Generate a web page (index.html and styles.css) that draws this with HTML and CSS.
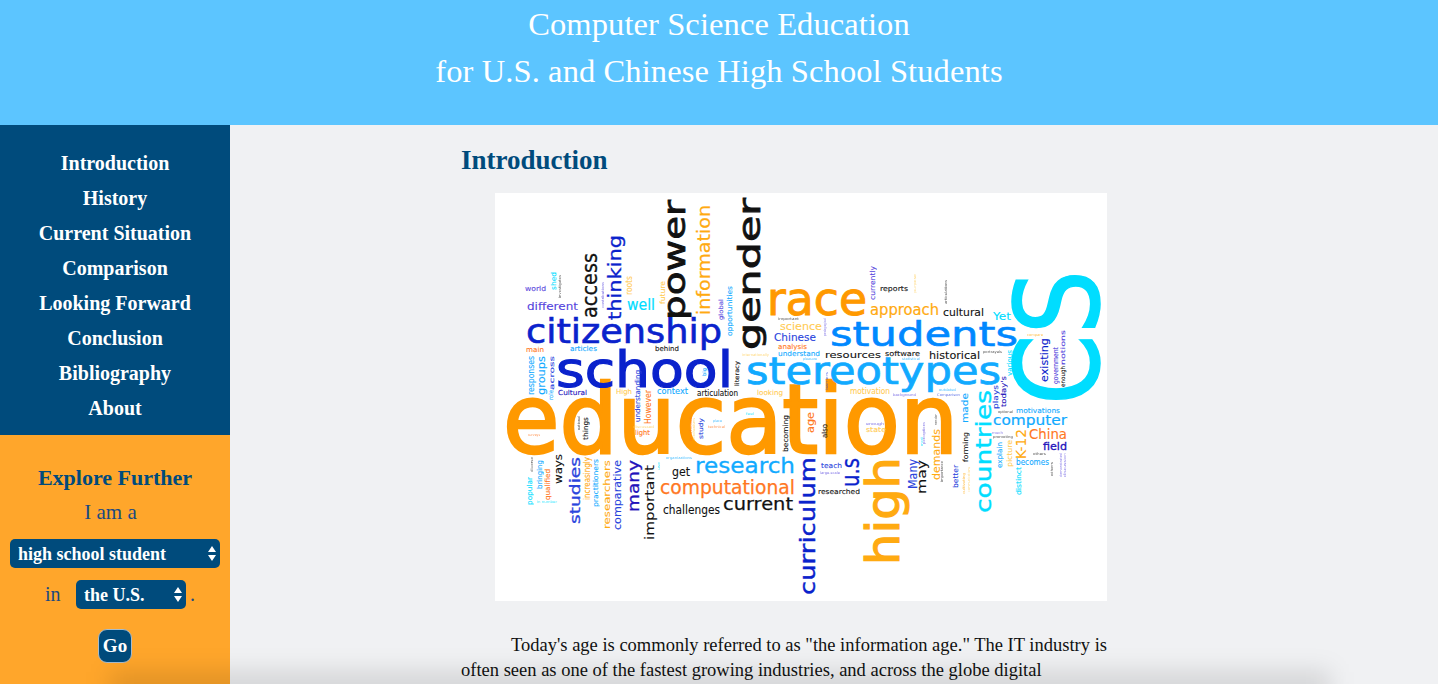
FILE: index.html
```html
<!DOCTYPE html>
<html lang="en">
<head>
  <meta charset="UTF-8">
  <meta name="viewport" content="width=device-width, initial-scale=1">
  <title>Computer Science Education</title>
  <link rel="stylesheet" href="styles.css">
</head>
<body>

  <header class="site-header">
    <h1>Computer Science Education<br>for U.S. and Chinese High School Students</h1>
  </header>

  <div class="page">
    <aside class="sidebar">
      <nav class="side-nav">
        <a href="#">Introduction</a>
        <a href="#">History</a>
        <a href="#">Current Situation</a>
        <a href="#">Comparison</a>
        <a href="#">Looking Forward</a>
        <a href="#">Conclusion</a>
        <a href="#">Bibliography</a>
        <a href="#">About</a>
      </nav>

      <form class="explore">
        <h3>Explore Further</h3>
        <p class="explore-line">I am a</p>
        <div class="select-wrap select-wide">
          <select>
            <option>high school student</option>
            <option>teacher</option>
          </select>
          <svg class="select-arrows" viewBox="0 0 8 15"><path d="M4 0l4 6H0zM4 15l4-6H0z"/></svg>
        </div>
        <div class="explore-row">
          <span class="explore-in">in</span>
          <div class="select-wrap select-short">
            <select>
              <option>the U.S.</option>
              <option>China</option>
            </select>
            <svg class="select-arrows" viewBox="0 0 8 15"><path d="M4 0l4 6H0zM4 15l4-6H0z"/></svg>
          </div>
          <span class="explore-dot">.</span>
        </div>
        <button type="button" class="go-btn">Go</button>
      </form>
    </aside>

    <main class="content">
      <h2>Introduction</h2>

      <!-- word cloud, coordinates are page pixels so viewBox starts at the image corner -->
      <svg class="cloud" viewBox="495 193 612 408" width="612" height="408">
        <!-- big horizontal words -->
        <text class="orange" x="503" y="453" font-size="97" stroke-width="2.5" textLength="455" lengthAdjust="spacingAndGlyphs">education</text>
        <text class="blue" x="556" y="387" font-size="49" stroke-width="1.2" textLength="177" lengthAdjust="spacingAndGlyphs">school</text>
        <text class="blue" x="526" y="343" font-size="33" stroke-width=".6" textLength="196" lengthAdjust="spacingAndGlyphs">citizenship</text>
        <text class="sky" x="830" y="346" font-size="34" stroke-width=".6" textLength="188" lengthAdjust="spacingAndGlyphs">students</text>
        <text class="aqua" x="746" y="384" font-size="38" stroke-width=".7" textLength="255" lengthAdjust="spacingAndGlyphs">stereotypes</text>
        <text class="orange" x="767" y="315" font-size="46" stroke-width="1" textLength="100" lengthAdjust="spacingAndGlyphs">race</text>
        <text class="aqua" x="695" y="473" font-size="21" stroke-width=".3" textLength="100" lengthAdjust="spacingAndGlyphs">research</text>
        <text class="tangerine" x="660" y="494" font-size="19" stroke-width=".25" textLength="135" lengthAdjust="spacingAndGlyphs">computational</text>
        <text class="dark" x="723" y="510" font-size="18" stroke-width=".25" textLength="70" lengthAdjust="spacingAndGlyphs">current</text>
        <text class="dark" x="663" y="514" font-size="12" textLength="57" lengthAdjust="spacingAndGlyphs">challenges</text>
        <text class="dark" x="672" y="476" font-size="12" textLength="18" lengthAdjust="spacingAndGlyphs">get</text>

        <!-- big vertical words -->
        <text class="cyan" transform="translate(1098 405) rotate(-90)" font-size="116" stroke-width="1.5" textLength="135" lengthAdjust="spacingAndGlyphs">CS</text>
        <text class="dark" transform="translate(760 350) rotate(-90)" font-size="31" stroke-width=".8" textLength="152" lengthAdjust="spacingAndGlyphs">gender</text>
        <text class="dark" transform="translate(685 320) rotate(-90)" font-size="30" stroke-width=".8" textLength="120" lengthAdjust="spacingAndGlyphs">power</text>
        <text class="amber" transform="translate(710 315) rotate(-90)" font-size="17" stroke-width=".2" textLength="110" lengthAdjust="spacingAndGlyphs">information</text>
        <text class="blue" transform="translate(621 320) rotate(-90)" font-size="17" stroke-width=".3" textLength="85" lengthAdjust="spacingAndGlyphs">thinking</text>
        <text class="dark" transform="translate(597 318) rotate(-90)" font-size="22" stroke-width=".3" textLength="65" lengthAdjust="spacingAndGlyphs">access</text>
        <text class="blue" transform="translate(815 595) rotate(-90)" font-size="22" stroke-width=".4" textLength="138" lengthAdjust="spacingAndGlyphs">curriculum</text>
        <text class="amber" transform="translate(899 565) rotate(-90)" font-size="46" stroke-width="1.2" textLength="108" lengthAdjust="spacingAndGlyphs">high</text>
        <text class="blue" transform="translate(859 487) rotate(-90)" font-size="25" stroke-width=".3" textLength="29" lengthAdjust="spacingAndGlyphs">u.s</text>
        <text class="cyan" transform="translate(991 513) rotate(-90)" font-size="22" stroke-width=".4" textLength="123" lengthAdjust="spacingAndGlyphs">countries</text>
        <text class="royal" transform="translate(580 524) rotate(-90)" font-size="14" stroke-width=".3" textLength="67" lengthAdjust="spacingAndGlyphs">studies</text>
        <text class="indigo" transform="translate(639 512) rotate(-90)" font-size="16" stroke-width=".3" textLength="52" lengthAdjust="spacingAndGlyphs">many</text>
        <text class="dark" transform="translate(654 540) rotate(-90)" font-size="13" textLength="75" lengthAdjust="spacingAndGlyphs">important</text>
        <text class="royal" transform="translate(621 530) rotate(-90)" font-size="10" textLength="70" lengthAdjust="spacingAndGlyphs">comparative</text>
        <text class="amber" transform="translate(610 529) rotate(-90)" font-size="9" textLength="69" lengthAdjust="spacingAndGlyphs">researchers</text>
        <text class="dark" transform="translate(562 484) rotate(-90)" font-size="10" textLength="30" lengthAdjust="spacingAndGlyphs">ways</text>
        <text class="royal" transform="translate(917 489) rotate(-90)" font-size="12" textLength="30" lengthAdjust="spacingAndGlyphs">Many</text>
        <text class="dark" transform="translate(926 494) rotate(-90)" font-size="13" textLength="34" lengthAdjust="spacingAndGlyphs">may</text>
        <text class="amber" transform="translate(940 480) rotate(-90)" font-size="10" textLength="51" lengthAdjust="spacingAndGlyphs">demands</text>
        <text class="blue" transform="translate(1048 382) rotate(-90)" font-size="10" textLength="44" lengthAdjust="spacingAndGlyphs">existing</text>
        <text class="amber" transform="translate(1026 459) rotate(-90)" font-size="14" textLength="30" lengthAdjust="spacingAndGlyphs">K-12</text>

        <!-- middle sized horizontal -->
        <text class="aqua" x="993" y="425" font-size="14" stroke-width=".2" textLength="74" lengthAdjust="spacingAndGlyphs">computer</text>
        <text class="tangerine" x="1029" y="439" font-size="14" textLength="38" lengthAdjust="spacingAndGlyphs">China</text>
        <text class="indigo" x="1043" y="450" font-size="11" stroke-width=".3" textLength="24" lengthAdjust="spacingAndGlyphs">field</text>
        <text class="amber" x="870" y="315" font-size="15" stroke-width=".2" textLength="69" lengthAdjust="spacingAndGlyphs">approach</text>
        <text class="dark" x="943" y="316" font-size="10" textLength="41" lengthAdjust="spacingAndGlyphs">cultural</text>
        <text class="cyan" x="993" y="320" font-size="11" textLength="18" lengthAdjust="spacingAndGlyphs">Yet</text>
        <text class="dark" x="825" y="358" font-size="9" textLength="56" lengthAdjust="spacingAndGlyphs">resources</text>
        <text class="dark" x="885" y="356" font-size="7" textLength="35" lengthAdjust="spacingAndGlyphs">software</text>
        <text class="dark" x="929" y="359" font-size="10" textLength="51" lengthAdjust="spacingAndGlyphs">historical</text>
        <text class="cyan" x="627" y="310" font-size="15" stroke-width=".2" textLength="28" lengthAdjust="spacingAndGlyphs">well</text>
        <text class="violet" x="527" y="310" font-size="10" textLength="51" lengthAdjust="spacingAndGlyphs">different</text>
        <text class="violet" x="525" y="291" font-size="7" textLength="21" lengthAdjust="spacingAndGlyphs">world</text>
        <text class="dark" x="880" y="291" font-size="7" textLength="28" lengthAdjust="spacingAndGlyphs">reports</text>
        <text class="yellow" x="780" y="330" font-size="10" textLength="42" lengthAdjust="spacingAndGlyphs">science</text>
        <text class="royal" x="774" y="341" font-size="10" textLength="42" lengthAdjust="spacingAndGlyphs">Chinese</text>
        <text class="tangerine" x="778" y="349" font-size="7" textLength="29" lengthAdjust="spacingAndGlyphs">analysis</text>
        <text class="aqua" x="778" y="356" font-size="7" textLength="42" lengthAdjust="spacingAndGlyphs">understand</text>
        <text class="tangerine" x="526" y="352" font-size="7" textLength="18" lengthAdjust="spacingAndGlyphs">main</text>
        <text class="aqua" x="570" y="351" font-size="7" textLength="27" lengthAdjust="spacingAndGlyphs">articles</text>
        <text class="dark" x="655" y="351" font-size="7" textLength="24" lengthAdjust="spacingAndGlyphs">behind</text>
        <text class="indigo" x="558" y="395" font-size="7" textLength="29" lengthAdjust="spacingAndGlyphs">Cultural</text>
        <text class="yellow" x="616" y="394" font-size="7" textLength="16" lengthAdjust="spacingAndGlyphs">High</text>
        <text class="aqua" x="657" y="394" font-size="8" textLength="31" lengthAdjust="spacingAndGlyphs">context</text>
        <text class="dark" x="697" y="396" font-size="8" textLength="41" lengthAdjust="spacingAndGlyphs">articulation</text>
        <text class="yellow" x="757" y="395" font-size="7" textLength="26" lengthAdjust="spacingAndGlyphs">looking</text>
        <text class="yellow" x="850" y="394" font-size="8" textLength="40" lengthAdjust="spacingAndGlyphs">motivation</text>
        <text class="tangerine" x="635" y="435" font-size="7" textLength="15" lengthAdjust="spacingAndGlyphs">light</text>
        <text class="yellow" x="866" y="432" font-size="7" textLength="20" lengthAdjust="spacingAndGlyphs">state</text>
        <text class="royal" x="821" y="468" font-size="7" textLength="21" lengthAdjust="spacingAndGlyphs">teach</text>
        <text class="dark" x="818" y="494" font-size="7" textLength="42" lengthAdjust="spacingAndGlyphs">researched</text>
        <text class="aqua" x="1016" y="413" font-size="7" textLength="44" lengthAdjust="spacingAndGlyphs">motivations</text>
        <text class="aqua" x="1016" y="465" font-size="8" textLength="33" lengthAdjust="spacingAndGlyphs">becomes</text>

        <!-- small vertical -->
        <text class="yellow" transform="translate(632 295) rotate(-90)" font-size="8" textLength="19" lengthAdjust="spacingAndGlyphs">roots</text>
        <text class="yellow" transform="translate(665 304) rotate(-90)" font-size="7" textLength="23" lengthAdjust="spacingAndGlyphs">future</text>
        <text class="cyan" transform="translate(556 290) rotate(-90)" font-size="7" textLength="18" lengthAdjust="spacingAndGlyphs">shed</text>
        <text class="violet" transform="translate(723 320) rotate(-90)" font-size="6" textLength="21" lengthAdjust="spacingAndGlyphs">global</text>
        <text class="aqua" transform="translate(732 336) rotate(-90)" font-size="7" textLength="50" lengthAdjust="spacingAndGlyphs">opportunities</text>
        <text class="aqua" transform="translate(534 395) rotate(-90)" font-size="8" textLength="39" lengthAdjust="spacingAndGlyphs">responses</text>
        <text class="aqua" transform="translate(545 395) rotate(-90)" font-size="11" textLength="39" lengthAdjust="spacingAndGlyphs">groups</text>
        <text class="royal" transform="translate(554 390) rotate(-90)" font-size="6" textLength="34" lengthAdjust="spacingAndGlyphs">across</text>
        <text class="royal" transform="translate(640 422) rotate(-90)" font-size="7" textLength="52" lengthAdjust="spacingAndGlyphs">understanding</text>
        <text class="tangerine" transform="translate(651 424) rotate(-90)" font-size="8" textLength="34" lengthAdjust="spacingAndGlyphs">However</text>
        <text class="aqua" transform="translate(706 376) rotate(-90)" font-size="5" textLength="8" lengthAdjust="spacingAndGlyphs">big</text>
        <text class="dark" transform="translate(739 386) rotate(-90)" font-size="6" textLength="25" lengthAdjust="spacingAndGlyphs">literacy</text>
        <text class="royal" transform="translate(703 439) rotate(-90)" font-size="6" textLength="21" lengthAdjust="spacingAndGlyphs">study</text>
        <text class="dark" transform="translate(588 440) rotate(-90)" font-size="7" textLength="23" lengthAdjust="spacingAndGlyphs">things</text>
        <text class="dark" transform="translate(788 452) rotate(-90)" font-size="7" textLength="37" lengthAdjust="spacingAndGlyphs">becoming</text>
        <text class="amber" transform="translate(590 500) rotate(-90)" font-size="8" textLength="43" lengthAdjust="spacingAndGlyphs">increasingly</text>
        <text class="aqua" transform="translate(598 507) rotate(-90)" font-size="7" textLength="48" lengthAdjust="spacingAndGlyphs">practitioners</text>
        <text class="cyan" transform="translate(532 505) rotate(-90)" font-size="7" textLength="28" lengthAdjust="spacingAndGlyphs">popular</text>
        <text class="aqua" transform="translate(542 489) rotate(-90)" font-size="7" textLength="29" lengthAdjust="spacingAndGlyphs">bringing</text>
        <text class="tangerine" transform="translate(550 500) rotate(-90)" font-size="7" textLength="31" lengthAdjust="spacingAndGlyphs">qualified</text>
        <text class="royal" transform="translate(958 488) rotate(-90)" font-size="7" textLength="23" lengthAdjust="spacingAndGlyphs">better</text>
        <text class="dark" transform="translate(968 462) rotate(-90)" font-size="7" textLength="30" lengthAdjust="spacingAndGlyphs">forming</text>
        <text class="aqua" transform="translate(968 423) rotate(-90)" font-size="9" textLength="30" lengthAdjust="spacingAndGlyphs">made</text>
        <text class="aqua" transform="translate(1002 468) rotate(-90)" font-size="7" textLength="26" lengthAdjust="spacingAndGlyphs">explain</text>
        <text class="yellow" transform="translate(1012 467) rotate(-90)" font-size="7" textLength="27" lengthAdjust="spacingAndGlyphs">picture</text>
        <text class="cyan" transform="translate(1021 495) rotate(-90)" font-size="7" textLength="28" lengthAdjust="spacingAndGlyphs">distinct</text>
        <text class="tangerine" transform="translate(814 433) rotate(-90)" font-size="10" textLength="21" lengthAdjust="spacingAndGlyphs">age</text>
        <text class="dark" transform="translate(827 438) rotate(-90)" font-size="7" textLength="14" lengthAdjust="spacingAndGlyphs">also</text>
        <text class="violet" transform="translate(875 300) rotate(-90)" font-size="7" textLength="34" lengthAdjust="spacingAndGlyphs">currently</text>
        <text class="cyan" transform="translate(1012 376) rotate(-90)" font-size="7" textLength="26" lengthAdjust="spacingAndGlyphs">various</text>
        <text class="indigo" transform="translate(1006 407) rotate(-90)" font-size="7" textLength="31" lengthAdjust="spacingAndGlyphs">today's</text>
        <text class="royal" transform="translate(998 409) rotate(-90)" font-size="7" textLength="24" lengthAdjust="spacingAndGlyphs">plays</text>
        <text class="violet" transform="translate(1058 384) rotate(-90)" font-size="7" textLength="37" lengthAdjust="spacingAndGlyphs">government</text>
        <text class="dark" transform="translate(1065 387) rotate(-90)" font-size="6" textLength="21" lengthAdjust="spacingAndGlyphs">enough</text>
        <text class="violet" transform="translate(1065 365) rotate(-90)" font-size="6" textLength="35" lengthAdjust="spacingAndGlyphs">notions</text>
        <text class="aqua" transform="translate(553 400) rotate(-90)" font-size="6" textLength="10" lengthAdjust="spacingAndGlyphs">role</text>

        <!-- the tiny ones -->
        <g class="tiny">
          <text class="dark" x="778" y="320" font-size="3.5" textLength="21" lengthAdjust="spacingAndGlyphs">important</text>
          <text class="yellow" x="742" y="356" font-size="3.5" textLength="27" lengthAdjust="spacingAndGlyphs">internationally</text>
          <text class="aqua" x="803" y="360" font-size="3.5" textLength="14" lengthAdjust="spacingAndGlyphs">pleasure</text>
          <text class="aqua" x="902" y="360" font-size="3.5" textLength="18" lengthAdjust="spacingAndGlyphs">statistical</text>
          <text class="dark" x="983" y="353" font-size="3.5" textLength="19" lengthAdjust="spacingAndGlyphs">portrayals</text>
          <text class="aqua" x="939" y="391" font-size="3.5" textLength="17" lengthAdjust="spacingAndGlyphs">outdated</text>
          <text class="violet" x="893" y="396" font-size="3.5" textLength="23" lengthAdjust="spacingAndGlyphs">background</text>
          <text class="royal" x="937" y="396" font-size="3.5" textLength="23" lengthAdjust="spacingAndGlyphs">Comparison</text>
          <text class="amber" x="1027" y="336" font-size="3.5" textLength="16" lengthAdjust="spacingAndGlyphs">compare</text>
          <text class="yellow" x="633" y="428" font-size="3.5" textLength="21" lengthAdjust="spacingAndGlyphs">discussed</text>
          <text class="tangerine" x="708" y="428" font-size="3.5" textLength="17" lengthAdjust="spacingAndGlyphs">technical</text>
          <text class="aqua" x="713" y="422" font-size="3.5" textLength="9" lengthAdjust="spacingAndGlyphs">place</text>
          <text class="cyan" x="746" y="415" font-size="3.5" textLength="8" lengthAdjust="spacingAndGlyphs">feel</text>
          <text class="aqua" x="666" y="459" font-size="3.5" textLength="26" lengthAdjust="spacingAndGlyphs">organizations</text>
          <text class="cyan" x="537" y="503" font-size="3.5" textLength="20" lengthAdjust="spacingAndGlyphs">in number</text>
          <text class="tangerine" x="528" y="436" font-size="3.5" textLength="12" lengthAdjust="spacingAndGlyphs">surveys</text>
          <text class="dark" x="998" y="413" font-size="3.5" textLength="15" lengthAdjust="spacingAndGlyphs">optional</text>
          <text class="dark" x="1033" y="455" font-size="3.5" textLength="13" lengthAdjust="spacingAndGlyphs">others</text>
          <text class="violet" x="820" y="474" font-size="3.5" textLength="20" lengthAdjust="spacingAndGlyphs">large-scale</text>
          <text class="violet" x="866" y="425" font-size="3.5" textLength="18" lengthAdjust="spacingAndGlyphs">enough</text>
          <text class="dark" x="993" y="438" font-size="3.5" textLength="20" lengthAdjust="spacingAndGlyphs">promoting</text>
          <text class="violet" x="992" y="434" font-size="3.5" textLength="11" lengthAdjust="spacingAndGlyphs">much</text>
          <text class="dark" transform="translate(561 298) rotate(-90)" font-size="3.5" textLength="23" lengthAdjust="spacingAndGlyphs">investigates</text>
          <text class="violet" transform="translate(604 308) rotate(-90)" font-size="3.5" textLength="26" lengthAdjust="spacingAndGlyphs">contributions</text>
          <text class="violet" transform="translate(826 336) rotate(-90)" font-size="3.5" textLength="18" lengthAdjust="spacingAndGlyphs">pedagogical</text>
          <text class="royal" transform="translate(828 390) rotate(-90)" font-size="3.5" textLength="18" lengthAdjust="spacingAndGlyphs">barriers</text>
          <text class="yellow" transform="translate(916 293) rotate(-90)" font-size="3.5" textLength="19" lengthAdjust="spacingAndGlyphs">purpose</text>
          <text class="dark" transform="translate(947 304) rotate(-90)" font-size="3.5" textLength="24" lengthAdjust="spacingAndGlyphs">articulations</text>
          <text class="dark" transform="translate(580 430) rotate(-90)" font-size="3.5" textLength="14" lengthAdjust="spacingAndGlyphs">national</text>
          <text class="dark" transform="translate(533 472) rotate(-90)" font-size="3.5" textLength="15" lengthAdjust="spacingAndGlyphs">diverse</text>
          <text class="dark" transform="translate(943 482) rotate(-90)" font-size="3.5" textLength="21" lengthAdjust="spacingAndGlyphs">importance</text>
          <text class="violet" transform="translate(925 444) rotate(-90)" font-size="3.5" textLength="22" lengthAdjust="spacingAndGlyphs">perceptions</text>
          <text class="dark" transform="translate(937 425) rotate(-90)" font-size="3.5" textLength="11" lengthAdjust="spacingAndGlyphs">render</text>
          <text class="cyan" transform="translate(923 446) rotate(-90)" font-size="3.5" textLength="9" lengthAdjust="spacingAndGlyphs">most</text>
          <text class="amber" transform="translate(965 494) rotate(-90)" font-size="3.5" textLength="21" lengthAdjust="spacingAndGlyphs">cultivating</text>
          <text class="yellow" transform="translate(970 492) rotate(-90)" font-size="3.5" textLength="25" lengthAdjust="spacingAndGlyphs">communications</text>
          <text class="dark" transform="translate(1053 476) rotate(-90)" font-size="3.5" textLength="14" lengthAdjust="spacingAndGlyphs">others</text>
          <text class="violet" transform="translate(1062 477) rotate(-90)" font-size="3.5" textLength="24" lengthAdjust="spacingAndGlyphs">demonstrated</text>
          <text class="violet" transform="translate(1066 477) rotate(-90)" font-size="3.5" textLength="24" lengthAdjust="spacingAndGlyphs">discussion</text>
          <text class="tangerine" transform="translate(692 441) rotate(-90)" font-size="3.5" textLength="24" lengthAdjust="spacingAndGlyphs">instead</text>
          <text class="yellow" transform="translate(695 440) rotate(-90)" font-size="3.5" textLength="22" lengthAdjust="spacingAndGlyphs">mechanisms</text>
          <text class="cyan" transform="translate(660 470) rotate(-90)" font-size="3.5" textLength="8" lengthAdjust="spacingAndGlyphs">use</text>
        </g>
      </svg>

      <p class="body-text">Today's age is commonly referred to as "the information age." The IT industry is often seen as one of the fastest growing industries, and across the globe digital</p>
    </main>
  </div>

  <div class="window-shade"></div>

</body>
</html>
```

FILE: styles.css
```css
/* ========== GLOBAL ========== */
* {
  box-sizing: border-box;
  margin: 0;
  padding: 0;
}

html, body {
  height: 684px;
  overflow: hidden;
}

body {
  position: relative;
  font-family: "Liberation Serif", serif;
  background-color: #f0f1f3;
}

/* ========== HEADER ========== */
.site-header {
  height: 125px;
  padding-top: 1px;
  background: #5cc5ff;
  text-align: center;
}

.site-header h1 {
  font-size: 32.5px;
  font-weight: normal;
  letter-spacing: 0.1px;
  line-height: 47px;
  color: white;
}

/* ========== LAYOUT ========== */
.page {
  display: flex;
  height: 559px;
}

.sidebar {
  width: 230px;
  flex-shrink: 0;
  display: flex;
  flex-direction: column;
}

.content {
  width: 680px;
  margin-left: 231px;
}

/* ========== SIDE NAV ========== */
.side-nav {
  height: 310px;
  padding-top: 21px;
  background: #004b7c;
  display: flex;
  flex-direction: column;
  align-items: center;
}

.side-nav a {
  height: 35px;
  line-height: 35px;
  font-size: 20px;
  font-weight: bold;
  color: white;
  text-decoration: none;
}

/* ========== EXPLORE FORM ========== */
.explore {
  flex: 1;
  padding: 30px 10px 0;
  background: #ffa62b;
  display: flex;
  flex-direction: column;
  align-items: center;
  color: #1b4a80;
}

.explore h3 {
  font-size: 22px;
  line-height: 26px;
  color: #004b7c;
}

.explore-line {
  margin-top: 8px;
  margin-right: 9px;
  font-size: 21px;
  line-height: 26px;
}

.select-wrap {
  position: relative;
  height: 29px;
}

.select-wrap select {
  appearance: none;
  width: 100%;
  height: 100%;
  padding-left: 8px;
  border: none;
  border-radius: 5px;
  background: #004b7c;
  color: white;
  font-family: inherit;
  font-size: 18px;
  font-weight: bold;
}

.select-arrows {
  position: absolute;
  top: 7px;
  right: 4px;
  width: 8px;
  height: 15px;
  fill: white;
  pointer-events: none;
}

.select-wide {
  width: 100%;
  margin-top: 14px;
}

.select-short {
  width: 110px;
}

.explore-row {
  width: 100%;
  margin-top: 12px;
  display: flex;
  align-items: center;
  padding-left: 35px;
  font-size: 20px;
}

.explore-in {
  width: 31px;
}

.explore-dot {
  margin-left: 4px;
}

.go-btn {
  width: 34px;
  height: 34px;
  margin-top: 20px;
  border: 1px solid #a9bccb;
  border-radius: 9px;
  background: #004b7c;
  color: white;
  font-family: inherit;
  font-size: 19px;
  font-weight: bold;
}

/* ========== CONTENT ========== */
.content h2 {
  height: 68px;
  padding-top: 18px;
  font-size: 27px;
  line-height: 34px;
  color: #004b7c;
}

.cloud {
  display: block;
  margin: 0 auto;
  background: white;
  font-family: "DejaVu Sans", sans-serif;
  stroke-width: 0.1px;
  filter: blur(0.3px);
}

.cloud .tiny {
  stroke-width: 0;
  opacity: 0.75;
}

.orange { fill: #ff9900; stroke: #ff9900; }
.amber { fill: #ffaa11; stroke: #ffaa11; }
.yellow { fill: #ffcc55; stroke: #ffcc55; }
.tangerine { fill: #ff7722; stroke: #ff7722; }
.blue { fill: #0a22cc; stroke: #0a22cc; }
.royal { fill: #2a44dd; stroke: #2a44dd; }
.indigo { fill: #2211bb; stroke: #2211bb; }
.violet { fill: #5544dd; stroke: #5544dd; }
.sky { fill: #0088ff; stroke: #0088ff; }
.aqua { fill: #11aaff; stroke: #11aaff; }
.cyan { fill: #00ddff; stroke: #00ddff; }
.dark { fill: #111111; stroke: #111111; }

.body-text {
  margin-top: 32px;
  font-size: 18.5px;
  line-height: 25px;
  text-indent: 50px;
  color: #111;
}

/* bottom edge of the window falls off into a soft shadow */
.window-shade {
  position: absolute;
  left: 110px;
  right: 108px;
  bottom: -18px;
  height: 30px;
  background: rgba(0, 0, 0, 0.12);
  filter: blur(12px);
}
```
